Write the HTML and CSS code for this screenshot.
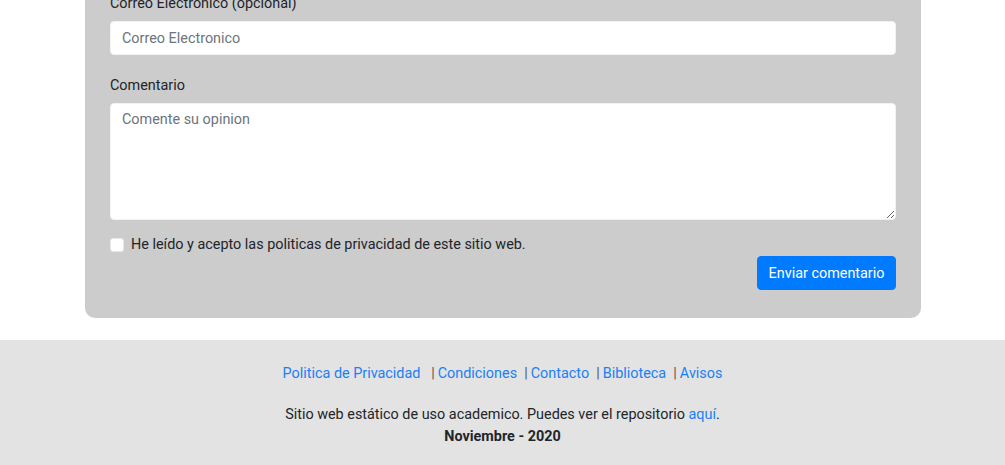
FILE: index.html
```html
<!DOCTYPE html>
<html lang="es">
<head>
<meta charset="utf-8">
<title>Comentarios</title>
<link rel="stylesheet" href="styles.css">
</head>
<body>
<main class="page">
  <form class="card">
    <div class="group">
      <label class="label" for="email">Correo Electronico (opcional)</label>
      <input class="control" id="email" type="email" placeholder="Correo Electronico">
    </div>
    <div class="group group-last">
      <label class="label" for="coment">Comentario</label>
      <textarea class="control area" id="coment" placeholder="Comente su opinion"></textarea>
    </div>
    <div class="check">
      <input class="check-input" type="checkbox" id="acepto">
      <label class="check-label" for="acepto">He leído y acepto las politicas de privacidad de este sitio web.</label>
    </div>
    <div class="actions">
      <button class="btn" type="button">Enviar comentario</button>
    </div>
  </form>
</main>
<footer class="footer">
  <nav class="links">
    <a href="#">Politica de Privacidad</a>&nbsp;&nbsp;&nbsp;<span class="sep">|</span><a href="#">Condiciones</a>&nbsp;&nbsp;<span class="sep">|</span><a href="#">Contacto</a>&nbsp;&nbsp;<span class="sep">|</span><a href="#">Biblioteca</a>&nbsp;&nbsp;<span class="sep">|</span><a href="#">Avisos</a>
  </nav>
  <p class="note">Sitio web estático de uso academico. Puedes ver el repositorio <a href="#">aquí</a>.</p>
  <p class="date">Noviembre - 2020</p>
</footer>
</body>
</html>
```
FILE: styles.css
```css
* { box-sizing: border-box; }
html, body { margin: 0; padding: 0; }
body {
  font-family: Roboto, "Liberation Sans", Arial, sans-serif;
  font-size: 14.4px;
  line-height: 21px;
  color: #212529;
  background: #fff;
  overflow: hidden;
}
.page {
  display: flex;
  justify-content: center;
  padding-left: 1px;
  padding-bottom: 22px;
}
.card {
  width: 836px;
  margin-top: -32px;
  background: #cccccc;
  border-radius: 10px;
  padding: 25px 25px 28px;
  display: flex;
  flex-direction: column;
}
.group { display: flex; flex-direction: column; margin-bottom: 20px; }
.group-last { margin-bottom: 14px; }
.label { display: block; margin-bottom: 7px; line-height: 21px; }
.control {
  display: block;
  width: 100%;
  height: 34px;
  padding: 5px 11px;
  font-family: inherit;
  font-size: 14.4px;
  line-height: 21px;
  color: #495057;
  background: #fff;
  border: 1px solid #f2f2f2;
  border-radius: 4px;
  outline: none;
}
.control::placeholder { color: #6c757d; opacity: 1; }
.area { height: 117px; resize: vertical; }
.check {
  display: flex;
  align-items: center;
  gap: 7px;
}
.check-input {
  width: 14px;
  height: 14px;
  margin: 0;
  appearance: none;
  -webkit-appearance: none;
  background: #fff;
  border: 1px solid #e8e8e8;
  border-radius: 3px;
}
.check-label { line-height: 21px; }
.actions {
  display: flex;
  justify-content: flex-end;
  margin-top: 1px;
}
.btn {
  font-family: inherit;
  font-size: 14.4px;
  line-height: 21px;
  color: #fff;
  background: #007bff;
  border: 1px solid #007bff;
  border-radius: 4px;
  padding: 5px 8px;
  height: 34px;
  width: 139px;
  cursor: pointer;
}
.footer {
  background: #e3e3e3;
  text-align: center;
  padding: 23px 0 18px;
  height: 125px;
}
.footer a { color: #1a80f5; text-decoration: none; }
.links { line-height: 21px; }
.sep { color: #555; margin-right: 3px; }
.note { margin: 20px 0 0; line-height: 22px; }
.date { margin: 0; font-weight: 700; line-height: 22px; }
```
